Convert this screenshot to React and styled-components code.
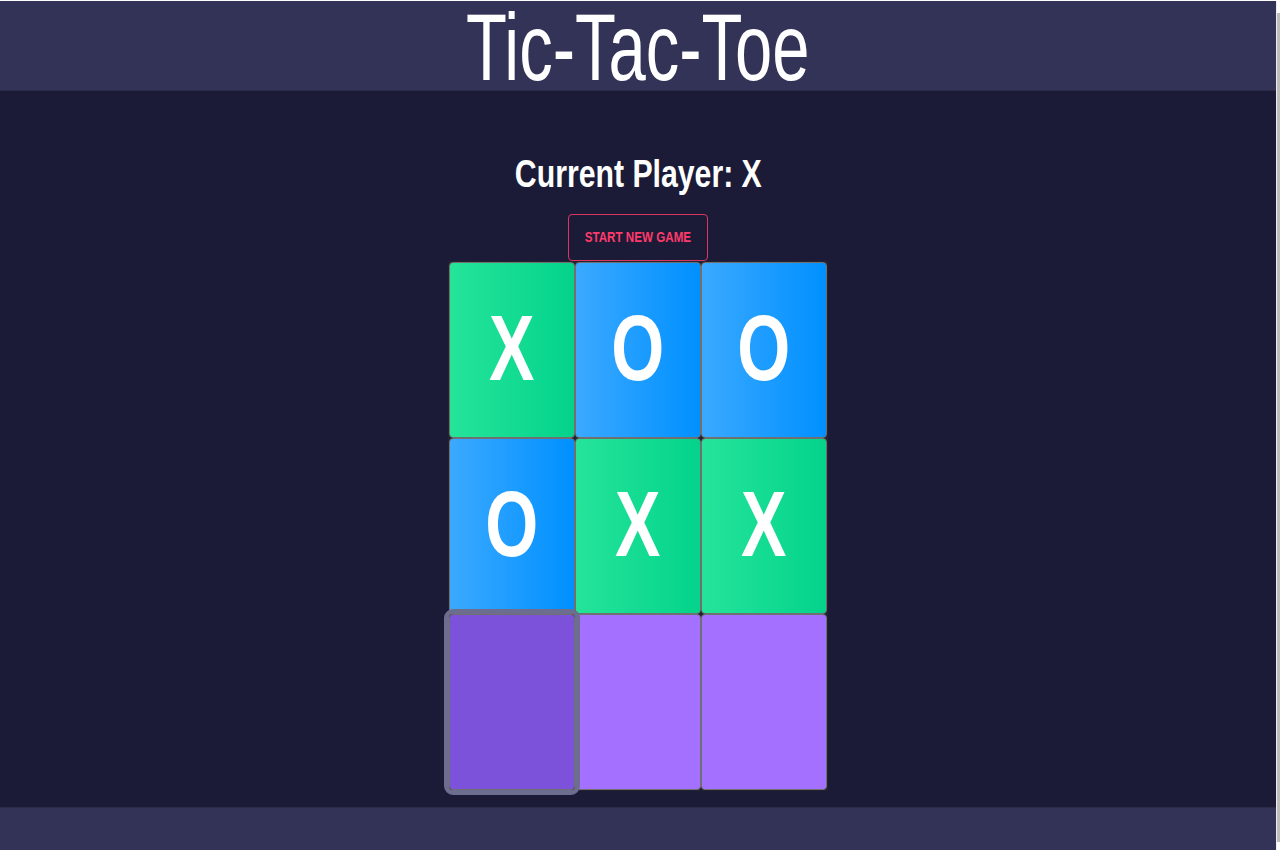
import React, { useState } from "react";
import styled, { createGlobalStyle } from "styled-components";

const GlobalStyle = createGlobalStyle`
  html, body {
    margin: 0;
    padding: 0;
    height: 850px;
    overflow: hidden;
    background: #ffffff;
    font-family: "Liberation Sans", Arial, sans-serif;
  }
`;

const Frame = styled.div`
  display: flex;
  height: 850px;
`;

const Page = styled.div`
  flex: 1;
  display: flex;
  flex-direction: column;
  margin-top: 1px;
  background: #1b1b37;
  border-right: 1px solid #eeeeee;
`;

const Scrollbar = styled.div`
  width: 3px;
  background: #ffffff;
  padding-top: 13px;
  display: flex;
`;

const Thumb = styled.div`
  flex: 1;
  margin-bottom: 8px;
  background: #bdbdbd;
`;

const Header = styled.header`
  height: 90px;
  display: flex;
  align-items: center;
  justify-content: center;
  background: #333358;
  border-bottom: 1px solid #2a2a4a;
  box-sizing: border-box;
`;

const Title = styled.h1`
  display: inline-block;
  margin: 0;
  padding-top: 2px;
  font-size: 95px;
  font-weight: 400;
  line-height: 86px;
  color: #ffffff;
  transform: scaleX(0.705);
`;

const Main = styled.main`
  flex: 1;
  display: flex;
  flex-direction: column;
  align-items: center;
  padding-top: 60px;
  box-sizing: border-box;
`;

const Status = styled.h2`
  margin: 0;
  font-size: 39px;
  line-height: 46px;
  font-weight: 700;
  color: #ffffff;
  transform: scaleX(0.775);
`;

const NewGameButton = styled.button`
  display: flex;
  align-items: center;
  justify-content: center;
  margin-top: 17px;
  width: 140px;
  height: 47px;
  padding: 0;
  background: transparent;
  border: 1px solid #d93662;
  border-radius: 4px;
  cursor: pointer;
`;

const ButtonLabel = styled.span`
  display: inline-block;
  flex-shrink: 0;
  font-family: "Liberation Sans", Arial, sans-serif;
  font-size: 15.5px;
  line-height: 18px;
  font-weight: 700;
  color: #ff3a6b;
  white-space: nowrap;
  transform: scaleX(0.75);
  margin-top: -1px;
`;

const Board = styled.div`
  display: grid;
  grid-template-columns: repeat(3, 126px);
  grid-template-rows: repeat(3, 176px);
  padding: 1px;
  background: #222230;
`;

const fills = {
  X: "linear-gradient(90deg, #25e49a 0%, #04d38b 100%)",
  O: "linear-gradient(90deg, #3ba9ff 0%, #0090ff 100%)",
  empty: "#a370ff",
  focused: "#7b52d9",
};

const Cell = styled.button`
  display: flex;
  align-items: center;
  justify-content: center;
  padding: 0;
  border: 1px solid #707070;
  border-radius: 4px;
  background: ${(p) => fills[p.$kind]};
  cursor: pointer;
  outline: ${(p) => (p.$kind === "focused" ? "5px solid #6d6d90" : "none")};
  outline-offset: 0;
  z-index: ${(p) => (p.$kind === "focused" ? 1 : 0)};
`;

const Mark = styled.span`
  display: inline-block;
  font-family: "Liberation Sans", Arial, sans-serif;
  font-size: 92px;
  font-weight: 700;
  line-height: 1;
  color: #ffffff;
  transform: scaleX(0.74);
  margin-top: -4px;
`;

const Footer = styled.footer`
  height: 43px;
  background: #333358;
  border-top: 1px solid #2a2a4a;
  box-sizing: border-box;
`;

const initial = ["X", "O", "O", "O", "X", "X", null, null, null];

export default function App() {
  const [squares, setSquares] = useState(initial);
  const [player, setPlayer] = useState("X");
  const focusedIndex = 6;

  const play = (i) => {
    if (squares[i]) return;
    const next = squares.slice();
    next[i] = player;
    setSquares(next);
    setPlayer(player === "X" ? "O" : "X");
  };

  const reset = () => {
    setSquares(Array(9).fill(null));
    setPlayer("X");
  };

  return (
    <>
      <GlobalStyle />
      <Frame>
        <Page>
          <Header>
            <Title>Tic-Tac-Toe</Title>
          </Header>
          <Main>
            <Status>Current Player: {player}</Status>
            <NewGameButton onClick={reset}>
              <ButtonLabel>START NEW GAME</ButtonLabel>
            </NewGameButton>
            <Board>
              {squares.map((value, i) => (
                <Cell
                  key={i}
                  $kind={value || (i === focusedIndex ? "focused" : "empty")}
                  onClick={() => play(i)}
                >
                  {value && <Mark>{value}</Mark>}
                </Cell>
              ))}
            </Board>
          </Main>
          <Footer />
        </Page>
        <Scrollbar>
          <Thumb />
        </Scrollbar>
      </Frame>
    </>
  );
}
